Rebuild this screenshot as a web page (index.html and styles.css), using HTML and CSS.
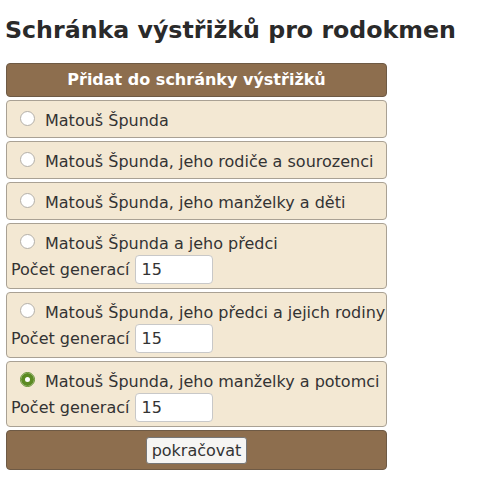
FILE: index.html
```html
<!DOCTYPE html>
<html lang="cs">
<head>
    <meta charset="UTF-8">
    <title>Schránka výstřižků</title>
    <link rel="stylesheet" href="styles.css">
</head>
<body>

    <h1>Schránka výstřižků pro rodokmen</h1>

    <!-- Clipboard form -->
    <form class="clip">
        <div class="clip-head">Přidat do schránky výstřižků</div>

        <label class="clip-row single">
            <span class="clip-line"><input type="radio" name="who" class="radio">Matouš Špunda</span>
        </label>

        <label class="clip-row single">
            <span class="clip-line"><input type="radio" name="who" class="radio">Matouš Špunda, jeho rodiče a sourozenci</span>
        </label>

        <label class="clip-row single">
            <span class="clip-line"><input type="radio" name="who" class="radio">Matouš Špunda, jeho manželky a děti</span>
        </label>

        <div class="clip-row">
            <label class="clip-line"><input type="radio" name="who" class="radio">Matouš Špunda a jeho předci</label>
            <div class="gen">Počet generací <input type="text" class="gen-input" value="15"></div>
        </div>

        <div class="clip-row">
            <label class="clip-line"><input type="radio" name="who" class="radio">Matouš Špunda, jeho předci a jejich rodiny</label>
            <div class="gen">Počet generací <input type="text" class="gen-input" value="15"></div>
        </div>

        <div class="clip-row">
            <label class="clip-line"><input type="radio" name="who" class="radio" checked>Matouš Špunda, jeho manželky a potomci</label>
            <div class="gen">Počet generací <input type="text" class="gen-input" value="15"></div>
        </div>

        <div class="clip-foot">
            <button type="button" class="go">pokračovat</button>
        </div>
    </form>

</body>
</html>
```

FILE: styles.css
```css
body {
    margin: 0;
    padding: 6px;
    font-family: "DejaVu Sans", sans-serif;
    color: #333;
    background: white;
}

h1 {
    font-size: 23.7px;
    font-weight: bold;
    margin: 10px 0 19px -1px;
    line-height: 28px;
    color: #2a2a2a;
}

/* Clipboard box */
.clip {
    width: 381px;
}

.clip-head {
    background-color: #8d6e4e;
    border: 1px solid #6e5a45;
    border-radius: 4px;
    color: white;
    font-size: 16px;
    font-weight: bold;
    text-align: center;
    height: 34px;
    line-height: 32px;
    box-sizing: border-box;
}

.clip-row {
    display: block;
    margin-top: 3px;
    padding: 4px;
    background-color: #f3e8d3;
    border: 1px solid #a9a194;
    border-radius: 4px;
    font-size: 16px;
}

.single {
    padding-bottom: 5px;
}

.clip-line {
    display: block;
    padding-top: 5px;
    line-height: 22px;
    white-space: nowrap;
}

/* Radio buttons */
.radio {
    appearance: none;
    width: 15px;
    height: 15px;
    margin: 0 10px 0 9px;
    border: 1px solid #b3afa8;
    border-radius: 50%;
    background: white;
    vertical-align: 0px;
    box-sizing: border-box;
}

.radio:checked {
    border-color: #5b8a22;
    box-shadow: inset 0 0 0 4px #5b8a22;
}

/* Generations */
.gen {
    display: flex;
    align-items: center;
    gap: 6px;
    line-height: 19px;
}

.gen-input {
    width: 78px;
    height: 29px;
    box-sizing: border-box;
    border: 1px solid #c8c8c8;
    border-radius: 4px;
    padding: 0 5px;
    font-family: "DejaVu Sans", sans-serif;
    font-size: 16px;
    color: #333;
    background: white;
}

.clip-foot {
    margin-top: 3px;
    height: 40px;
    background-color: #8d6e4e;
    border: 1px solid #6e5a45;
    border-radius: 4px;
    box-sizing: border-box;
    display: flex;
    align-items: center;
    justify-content: center;
}

.go {
    font-family: "DejaVu Sans", sans-serif;
    font-size: 16px;
    color: #333;
    background: #f6f5f3;
    border: 1px solid #777;
    border-radius: 3px;
    padding: 3px 5px;
    height: 27px;
    line-height: 19px;
}
```
